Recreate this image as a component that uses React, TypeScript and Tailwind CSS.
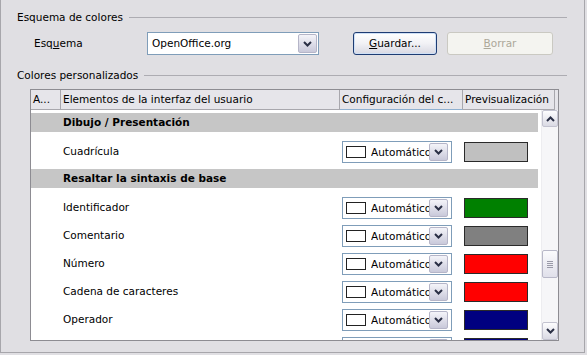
import React from "react";

const Chevron = ({ up = false }: { up?: boolean }) => (
  <svg width="9" height="6" viewBox="0 0 9 6" className="block">
    <path
      d={up ? "M1 5 L4.5 1.5 L8 5" : "M1 1 L4.5 4.5 L8 1"}
      fill="none"
      stroke="#2a2f45"
      strokeWidth="2"
    />
  </svg>
);

const DropButton = ({ cls }: { cls: string }) => (
  <div
    className={`${cls} flex items-center justify-center rounded-[2px] border border-[#b5b5c8] bg-gradient-to-b from-[#f4f4f9] to-[#c9c9da]`}
  >
    <Chevron />
  </div>
);

const SectionTitle = ({ text, mt }: { text: string; mt: string }) => (
  <div className={`flex h-[14px] items-center pl-[16px] pr-[17px] ${mt}`}>
    <span className="whitespace-nowrap">{text}</span>
    <div className="ml-[6px] h-0 flex-1 border-t border-[#adacb2]" />
  </div>
);

type Row =
  | { kind: "band"; name: string }
  | { kind: "item"; name: string; color: string };

const rows: Row[] = [
  { kind: "band", name: "Dibujo / Presentación" },
  { kind: "item", name: "Cuadrícula", color: "#c0c0c0" },
  { kind: "band", name: "Resaltar la sintaxis de base" },
  { kind: "item", name: "Identificador", color: "#008000" },
  { kind: "item", name: "Comentario", color: "#808080" },
  { kind: "item", name: "Número", color: "#ff0000" },
  { kind: "item", name: "Cadena de caracteres", color: "#ff0000" },
  { kind: "item", name: "Operador", color: "#000080" },
  { kind: "item", name: "Expresión reservada", color: "#000080" },
];

const ColorCombo = () => (
  <div className="flex h-[22px] w-[110px] shrink-0 items-center overflow-hidden border border-[#7f9db9] bg-white">
    <div className="ml-[3px] h-[12px] w-[20px] shrink-0 border border-[#222]" />
    <div className="ml-[5px] w-[58px] shrink-0 overflow-hidden whitespace-nowrap">
      Automático
    </div>
    <DropButton cls="h-[18px] w-[19px] shrink-0" />
  </div>
);

export default function App() {
  return (
    <div
      className="h-[355px] w-[587px] overflow-hidden bg-[#e0dfe3] text-[10.5px] leading-[13px] text-black"
      style={{ fontFamily: '"DejaVu Sans", sans-serif' }}
    >
      <div className="flex h-[353px] w-[585px] flex-col border-b border-l border-r border-[#a7a6ab]">
        <SectionTitle text="Esquema de colores" mt="mt-[10px]" />

        <div className="mt-[8px] flex h-[23px] items-center">
          <div className="w-[146px] shrink-0 pl-[33px]">
            Esq<span className="underline">u</span>ema
          </div>
          <div className="flex h-[23px] w-[172px] shrink-0 items-center border border-[#7f9db9] bg-white pr-[1px]">
            <span className="ml-[4px] flex-1">OpenOffice.org</span>
            <DropButton cls="h-[19px] w-[19px]" />
          </div>
          <div className="ml-[34px] flex h-[23px] w-[84px] shrink-0 items-center justify-center rounded-[3px] border border-[#1e3c73] bg-gradient-to-b from-white via-[#f1f1f5] to-[#d8d8e2] shadow-[inset_0_0_0_1px_#cfe0f6]">
            <span>
              <span className="underline">G</span>uardar...
            </span>
          </div>
          <div className="ml-[10px] flex h-[23px] w-[106px] shrink-0 items-center justify-center rounded-[3px] border border-[#cac9c2] bg-[#f4f4f0] text-[#aca899]">
            <span>
              <span className="underline">B</span>orrar
            </span>
          </div>
        </div>

        <SectionTitle text="Colores personalizados" mt="mt-[13px]" />

        <div className="ml-[29px] mt-[7px] flex h-[252px] w-[529px] flex-col border border-[#8d8c92] bg-white">
          <div className="flex h-[20px] shrink-0 bg-[#e6e5ea]">
            <div className="flex w-[30px] items-center border-b border-r border-[#a8a7ad] pl-[2px]">
              A...
            </div>
            <div className="flex w-[279px] items-center border-b border-r border-[#a8a7ad] pl-[2px]">
              Elementos de la interfaz del usuario
            </div>
            <div className="flex w-[123px] items-center overflow-hidden whitespace-nowrap border-b border-r border-b-[#8fb0d0] border-r-[#a8a7ad] pl-[2px]">
              Configuración del c...
            </div>
            <div className="flex w-[92px] items-center overflow-hidden whitespace-nowrap border-b border-r border-[#a8a7ad] pl-[2px]">
              Previsualización
            </div>
            <div className="flex-1" />
          </div>

          <div className="flex min-h-0 flex-1">
            <div className="min-w-0 flex-1 overflow-hidden">
              {rows.map((r) =>
                r.kind === "band" ? (
                  <div key={r.name} className="h-[28px] pr-[3px] pt-[3px]">
                    <div className="flex h-[19px] items-center bg-[#c6c6c6] pl-[32px] font-bold">
                      {r.name}
                    </div>
                  </div>
                ) : (
                  <div key={r.name} className="flex h-[28px] items-center">
                    <div className="w-[311px] shrink-0 pb-[2px] pl-[32px]">{r.name}</div>
                    <ColorCombo />
                    <div
                      className="ml-[12px] h-[20px] w-[64px] shrink-0 border border-[#2a2a2a]"
                      style={{ backgroundColor: r.color }}
                    />
                  </div>
                )
              )}
            </div>

            <div className="flex w-[17px] shrink-0 flex-col border-l border-[#ededf0] bg-[#f6f6f8]">
              <div className="flex h-[17px] items-center justify-center rounded-[2px] border border-[#c3c3d0] bg-gradient-to-b from-[#fdfdfe] to-[#dadae4]">
                <Chevron up />
              </div>
              <div className="mt-[123px] flex h-[28px] flex-col items-center justify-center gap-[1px] rounded-[2px] border border-[#b8b8c8] bg-gradient-to-b from-[#fbfbfd] to-[#e0e0ea]">
                <div className="h-[1px] w-[6px] bg-[#9a9aa8]" />
                <div className="h-[1px] w-[6px] bg-[#9a9aa8]" />
                <div className="h-[1px] w-[6px] bg-[#9a9aa8]" />
                <div className="h-[1px] w-[6px] bg-[#9a9aa8]" />
              </div>
              <div className="flex-1" />
              <div className="flex h-[18px] items-center justify-center rounded-[2px] border border-[#c3c3d0] bg-gradient-to-b from-[#fdfdfe] to-[#dadae4]">
                <Chevron />
              </div>
            </div>
          </div>
        </div>
      </div>
    </div>
  );
}
